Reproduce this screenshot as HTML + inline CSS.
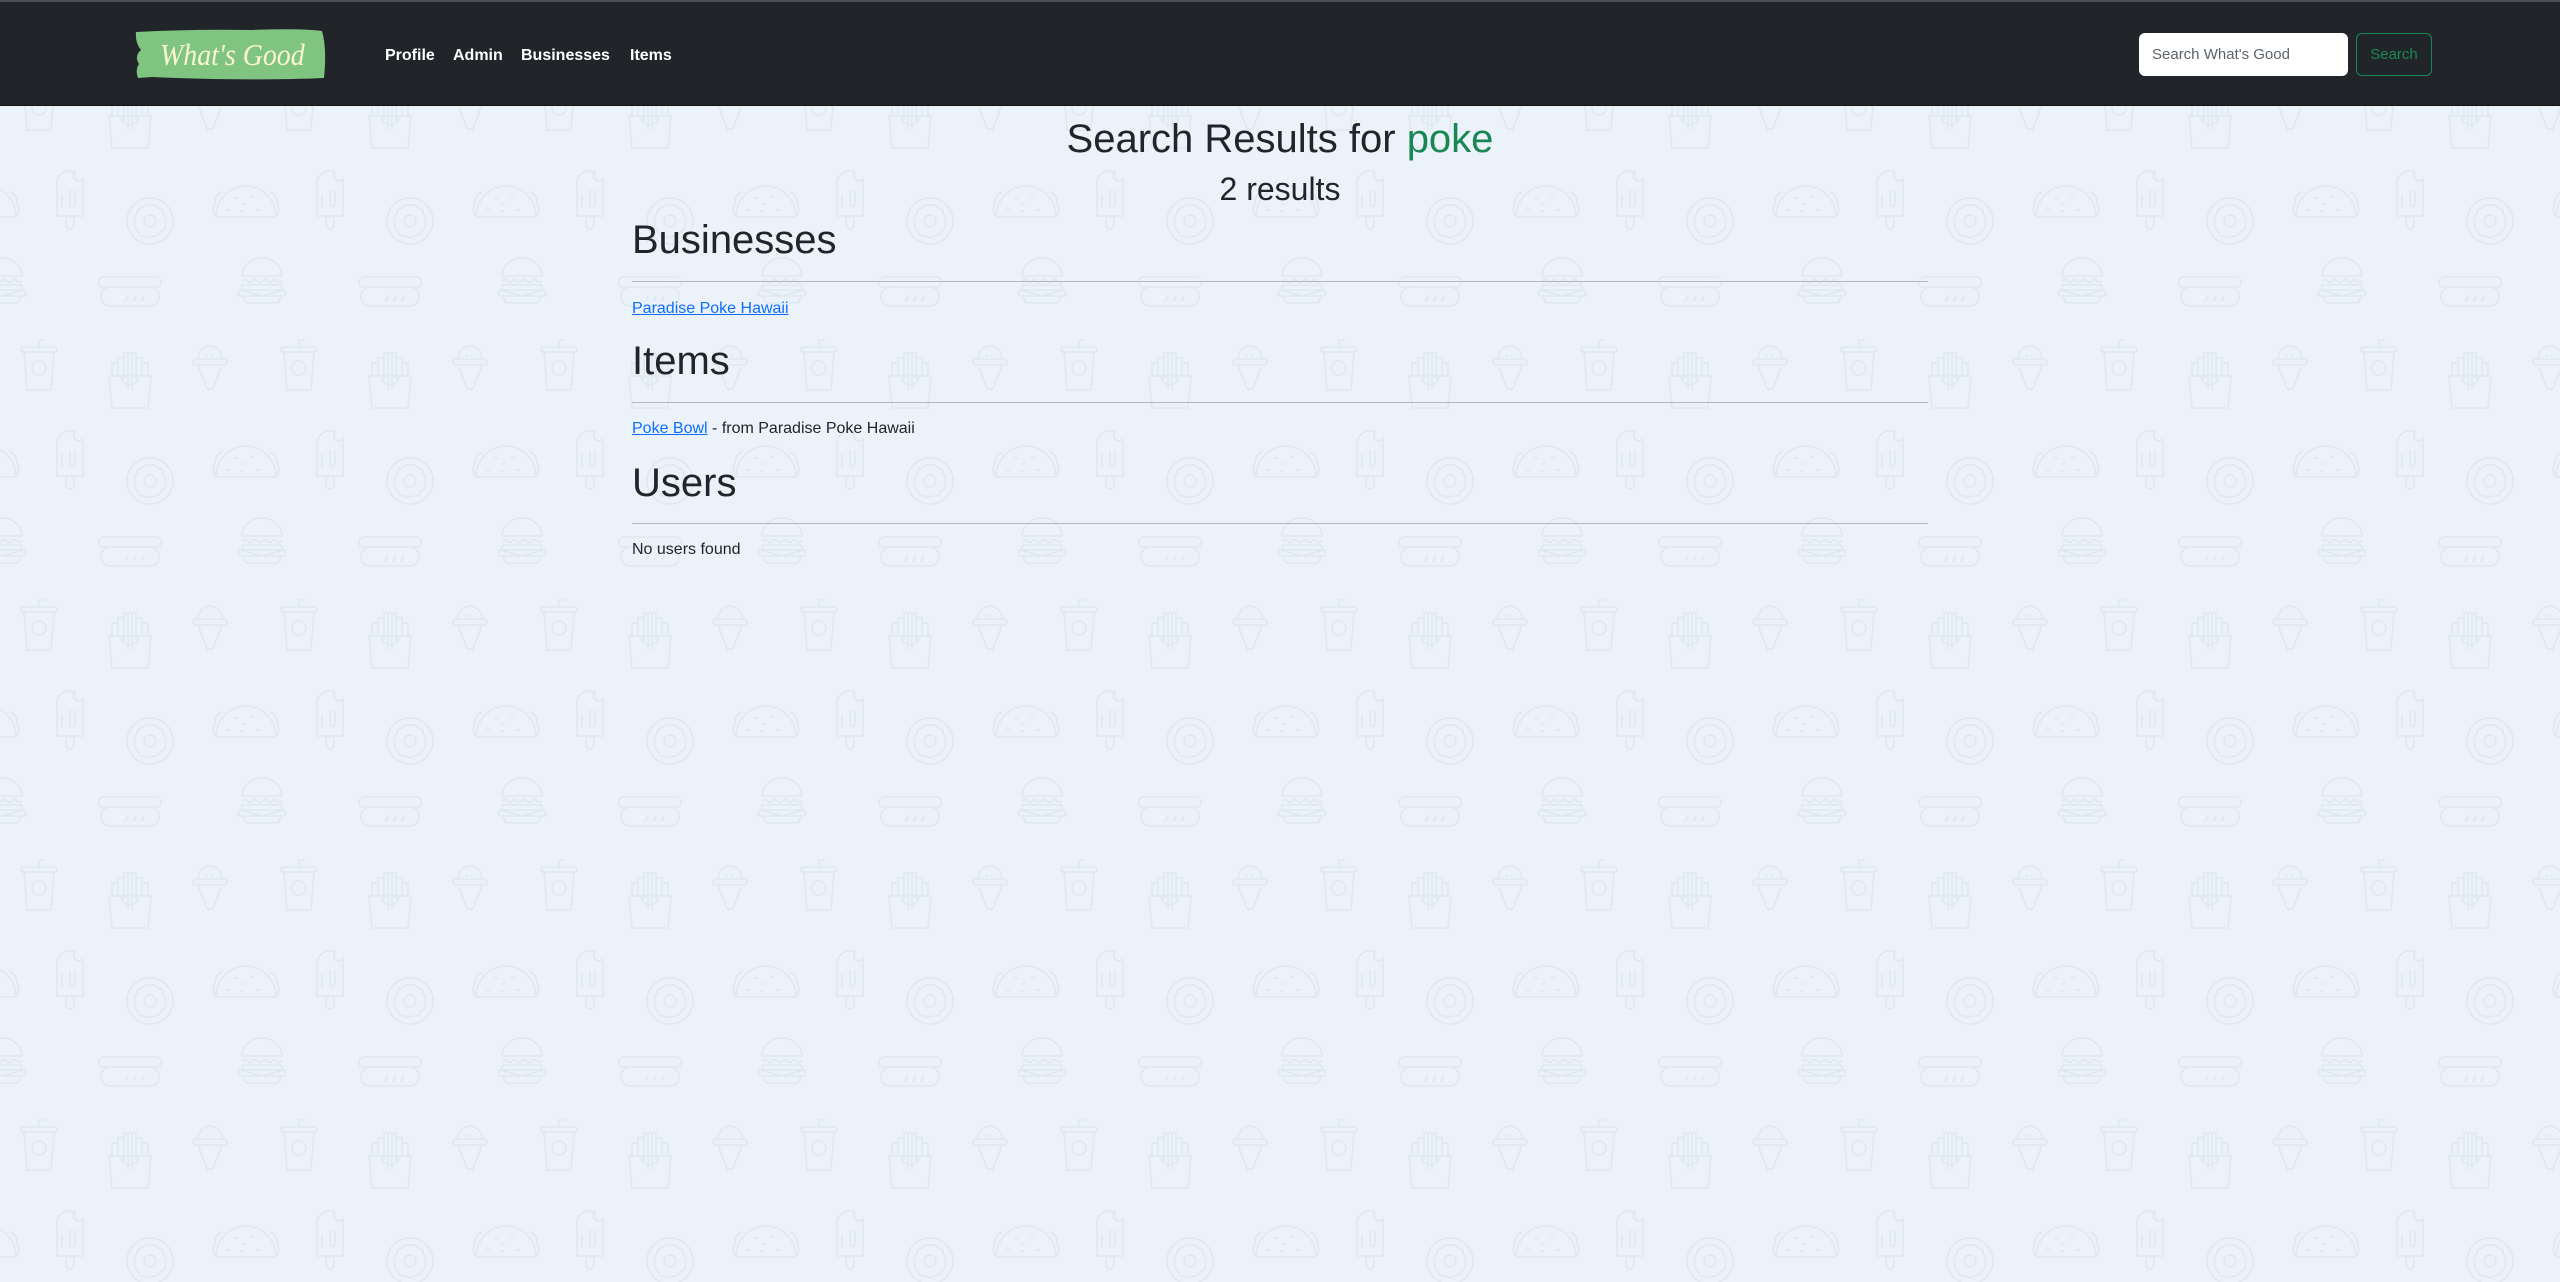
<!DOCTYPE html>
<html><head><meta charset="utf-8"><style>
html,body{margin:0;padding:0;width:2560px;height:1282px;overflow:hidden;background:#ebf2fa;font-family:"Liberation Sans",Arial,sans-serif;color:#212529;}
#bg{position:absolute;left:0;top:0;}
.nav{position:absolute;left:0;top:0;width:2560px;height:106px;background:#212529;border-top:2px solid #495057;box-sizing:border-box;border-bottom:1px solid #111;}
.nl{position:absolute;top:43px;color:#fff;font-size:16px;font-weight:bold;line-height:22px;}
.t{position:absolute;white-space:nowrap;}
.hr{position:absolute;left:632px;width:1296px;height:1px;background:#b3b8be;}
a{color:#0d6efd;text-decoration:underline;}
</style></head><body>
<svg id="bg" width="2560" height="1282" xmlns="http://www.w3.org/2000/svg">
<defs>
<g id="cup"><rect x="-18" y="-21" width="36" height="5" rx="2"/><path d="M-15,-16 L-12,22 L12,22 L15,-16"/><circle cx="0" cy="0" r="7"/><path d="M0,-21 V-28 H6"/></g>
<g id="fries"><path d="M-21,-4 L-18,28 L18,28 L21,-4 Z"/><path d="M-9,-4 A9,9 0 0 0 9,-4"/><path d="M-18,-4 V-17 H-12 V-22 H-6 V-27 H6 V-22 H12 V-17 H18 V-4"/><path d="M-2,-27 V10 M2,-27 V10 M-12,-17 V-4 M12,-17 V-4 M-6,-22 V0 M6,-22 V0"/></g>
<g id="cone"><path d="M-12,-8 A12,13 0 0 1 12,-8"/><rect x="-17" y="-8" width="34" height="6" rx="3"/><path d="M-12,-2 L-3,22 L3,22 L12,-2"/><path d="M-5,-11 H5" stroke-dasharray="3 2"/></g>
<g id="pop"><path d="M-13,16 V-18 A13,12 0 0 1 5,-28 A5,5 0 0 0 13,-21 V16 Z"/><rect x="-4" y="16" width="8" height="13" rx="4"/><path d="M-8,-6 V8 M0,-10 V4 A2.5,2.5 0 0 0 5,4 V-10"/></g>
<g id="donut"><circle r="23"/><circle r="6"/><path d="M0,-16 Q5,-17 8,-13 Q14,-12 13,-7 Q17,-3 15,2 Q17,8 11,10 Q9,16 3,15 Q-1,18 -5,15 Q-11,16 -12,10 Q-17,7 -15,2 Q-17,-3 -13,-7 Q-13,-13 -8,-13 Q-4,-17 0,-16Z"/></g>
<g id="taco"><path d="M-30,16 A30,31 0 0 1 30,16 Z"/><path d="M-30,16 Q-35,8 -31,2 Q-31,-6 -24,-9 M30,16 Q35,8 31,2 Q31,-6 24,-9"/><path d="M-12,-3 h4 M4,-4 h4 M-5,3 h4 M-20,9 h4 M-6,10 h4 M10,9 h4" /></g>
<g id="burger"><path d="M-20,-6 A20,18 0 0 1 20,-6 Z"/><path d="M-20,-1 q3,-3 5,0 q3,3 5,0 q3,-3 5,0 q3,3 5,0 q3,-3 5,0 q3,3 5,0 q3,-3 5,0 q3,3 5,0"/><rect x="-20" y="3" width="40" height="5" rx="1"/><path d="M-21,8 L0,14 L21,8 A3,3 0 0 1 21,14 H-21 A3,3 0 0 1 -21,8"/><path d="M-18,14 V17 A4,4 0 0 0 -14,21 H14 A4,4 0 0 0 18,17 V14"/></g>
<g id="hot"><path d="M-27,-4 A4,4 0 0 1 -31,-8 A5,5 0 0 1 -26,-14 H26 A5,5 0 0 1 31,-8 A4,4 0 0 1 27,-4 Z"/><rect x="-29" y="-4" width="58" height="19" rx="9"/><path d="M-6,10 q3,0 4,-6 M2,10 q3,0 4,-6 M10,10 q3,0 4,-6"/></g>
<pattern id="p" x="0" y="0" width="260" height="260" patternUnits="userSpaceOnUse">
<g fill="none" stroke="#dfe7f1" stroke-width="1.5">
<use href="#cup" x="39" y="108"/><use href="#fries" x="130" y="120"/><use href="#cone" x="210" y="107"/>
<use href="#pop" x="70" y="200"/><use href="#donut" x="150" y="221"/><use href="#taco" x="246" y="201"/><use href="#taco" x="-14" y="201"/>
<use href="#burger" x="2" y="22"/><use href="#burger" x="262" y="22"/><use href="#burger" x="2" y="282"/><use href="#burger" x="262" y="282"/>
<use href="#hot" x="130" y="31"/><use href="#hot" x="130" y="291"/><use href="#donut" x="150" y="-39"/><use href="#pop" x="70" y="-60"/><use href="#taco" x="246" y="-59"/><use href="#taco" x="-14" y="-59"/>
</g></pattern></defs>
<rect width="2560" height="1282" fill="url(#p)"/>
</svg>

<div class="nav">
<svg style="position:absolute;left:132px;top:26px" width="196" height="54"><path d="M4,4 Q60,1 120,2 Q170,0 190,3 Q195,20 192,50 Q150,52 80,51 Q40,50 20,49 L6,50 Q3,42 7,36 Q2,28 9,22 Q3,15 4,4 Z" fill="#7fc481"/></svg>
<div class="t" style="left:160px;top:33px;font-family:'Liberation Serif',serif;font-style:italic;font-size:31px;color:#fbf6cf;line-height:40px;transform:scaleX(0.9);transform-origin:left;">What's Good</div>
<div class="nl" style="left:385px">Profile</div>
<div class="nl" style="left:453px">Admin</div>
<div class="nl" style="left:521px">Businesses</div>
<div class="nl" style="left:630px">Items</div>
<div style="position:absolute;left:2139px;top:31px;width:209px;height:43px;background:#fff;border-radius:6px;box-sizing:border-box;padding-left:13px;font-size:15px;line-height:43px;color:#5c636a;">Search What's Good</div>
<div style="position:absolute;left:2356px;top:31px;width:76px;height:43px;border:1px solid #198754;border-radius:6px;box-sizing:border-box;text-align:center;font-size:15px;line-height:41px;color:#198754;">Search</div>
</div>

<div class="t" style="left:0;width:2560px;text-align:center;top:115px;font-size:40px;line-height:48px;">Search Results for <span style="color:#198754">poke</span></div>
<div class="t" style="left:0;width:2560px;text-align:center;top:170px;font-size:32px;line-height:38px;">2 results</div>

<div class="t" style="left:632px;top:216px;font-size:40px;line-height:48px;">Businesses</div>
<div class="hr" style="top:281px"></div>
<div class="t" style="left:632px;top:299px;font-size:16px;line-height:20px;"><a>Paradise Poke Hawaii</a></div>

<div class="t" style="left:632px;top:337px;font-size:40px;line-height:48px;">Items</div>
<div class="hr" style="top:402px"></div>
<div class="t" style="left:632px;top:419px;font-size:16px;line-height:20px;"><a>Poke Bowl</a> - from Paradise Poke Hawaii</div>

<div class="t" style="left:632px;top:459px;font-size:40px;line-height:48px;">Users</div>
<div class="hr" style="top:523px"></div>
<div class="t" style="left:632px;top:540px;font-size:16px;line-height:20px;">No users found</div>
</body></html>
